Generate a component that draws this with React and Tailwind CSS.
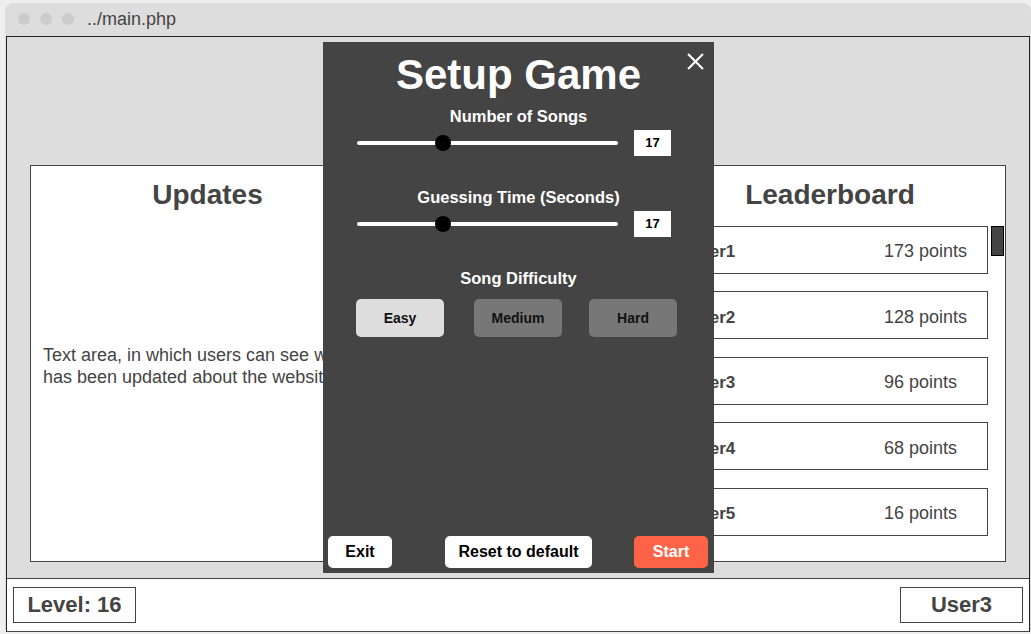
import React from 'react';

const leaders = [
  { name: 'User1', points: 173 },
  { name: 'User2', points: 128 },
  { name: 'User3', points: 96 },
  { name: 'User4', points: 68 },
  { name: 'User5', points: 16 },
];

const Slider = ({ value, pos }) => (
  <div className="flex items-center ml-[34px] self-start h-[26px]">
    <div className="relative w-[261px] h-[4px] bg-white rounded-full">
      <div
        className="absolute top-1/2 w-[16px] h-[16px] -translate-x-1/2 -translate-y-1/2 rounded-full bg-black"
        style={{ left: `${pos}px` }}
      />
    </div>
    <div className="ml-[16px] w-[37px] h-[26px] bg-white flex items-center justify-center text-[13px] font-bold text-black">
      {value}
    </div>
  </div>
);

const SetupModal = () => (
  <div className="absolute left-[323px] top-[42px] w-[391px] h-[531px] bg-[#444444] flex flex-col items-center text-white">
    <button className="absolute right-[10px] top-[11px] w-[17px] h-[17px]">
      <svg viewBox="0 0 16 16" className="w-full h-full" fill="none" stroke="white" strokeWidth="2">
        <path d="M1 1 L15 15 M15 1 L1 15" />
      </svg>
    </button>
    <h1 className="mt-[9px] text-[42px] leading-[48px] font-bold">Setup Game</h1>
    <div className="mt-[7px] text-[16.5px] leading-[20px] font-bold">Number of Songs</div>
    <div className="mt-[4px] self-stretch flex">
      <Slider value={17} pos={86} />
    </div>
    <div className="mt-[31px] text-[16.5px] leading-[20px] font-bold">Guessing Time (Seconds)</div>
    <div className="mt-[4px] self-stretch flex">
      <Slider value={17} pos={86} />
    </div>
    <div className="mt-[31px] text-[16.5px] leading-[20px] font-bold">Song Difficulty</div>
    <div className="mt-[11px] self-stretch flex pl-[33px] text-[14px] font-bold text-[#111]">
      <button className="w-[88px] h-[38px] rounded-[5px] bg-[#dddddd]">Easy</button>
      <button className="ml-[30px] w-[88px] h-[38px] rounded-[5px] bg-[#777777]">Medium</button>
      <button className="ml-[27px] w-[88px] h-[38px] rounded-[5px] bg-[#777777]">Hard</button>
    </div>
    <div className="mt-auto mb-[5px] self-stretch flex items-center px-[5px] pr-[6px] text-[16px] font-bold">
      <button className="w-[64px] h-[32px] rounded-[5px] bg-white text-black">Exit</button>
      <button className="ml-[53px] w-[147px] h-[32px] rounded-[5px] bg-white text-black">Reset to default</button>
      <button className="ml-auto w-[74px] h-[32px] rounded-[5px] bg-[#ff6347] text-white">Start</button>
    </div>
  </div>
);

export default function App() {
  return (
    <div className="relative w-[1031px] h-[634px] overflow-hidden bg-[#efefef] pt-[3px] pl-[5px] font-['Liberation_Sans',Arial,sans-serif] text-[#444]">
      <div className="w-[1026px] h-[629px] bg-[#dddddd] rounded-t-[8px] flex flex-col">
        {/* title bar */}
        <div className="h-[33px] flex items-center pl-[13px]">
          <span className="w-[12px] h-[12px] rounded-full bg-[#cccccc]" />
          <span className="ml-[10px] w-[12px] h-[12px] rounded-full bg-[#cccccc]" />
          <span className="ml-[10px] w-[12px] h-[12px] rounded-full bg-[#cccccc]" />
          <span className="ml-[13px] text-[18px] text-[#444]">../main.php</span>
        </div>

        {/* page */}
        <div className="ml-[1px] w-[1024px] h-[597px] border border-[#222] border-b-[#444] flex flex-col">
          <div className="h-[541px] flex justify-between px-[23px] pt-[128px] pb-[16px]">
            {/* Updates */}
            <div className="w-[355px] bg-white border border-[#444] flex flex-col">
              <h2 className="mt-[13px] text-center text-[28px] leading-[32px] font-bold">Updates</h2>
              <p className="mt-[133px] pl-[12px] pr-[12px] text-[18px] leading-[22px]">
                Text area, in which users can see what has been updated about the website.
              </p>
            </div>

            {/* Leaderboard */}
            <div className="w-[352px] bg-white border border-[#444] flex flex-col">
              <h2 className="mt-[13px] text-center text-[28px] leading-[32px] font-bold">Leaderboard</h2>
              <div className="mt-[15px] flex pl-[17px] pr-[1px]">
                <div className="w-[316px] flex flex-col gap-[17.5px]">
                  {leaders.map((l) => (
                    <div key={l.name} className="h-[48px] border border-[#444] flex items-center pl-[15px] pt-[4px]">
                      <span className="flex-1 font-bold text-[17px]">{l.name}</span>
                      <span className="w-[103px] shrink-0 text-[18px]">{l.points} points</span>
                    </div>
                  ))}
                </div>
                <div className="ml-[3px] w-[13px] h-[30px] bg-[#444] border border-black" />
              </div>
            </div>
          </div>

          {/* footer */}
          <div className="flex-1 bg-white border-t border-[#444] flex justify-between items-start pt-[8px] px-[6px]">
            <div className="w-[123px] h-[36px] border border-[#444] flex items-center justify-center text-[22px] font-bold">
              Level: 16
            </div>
            <div className="w-[123px] h-[36px] border border-[#444] flex items-center justify-center text-[22px] font-bold">
              User3
            </div>
          </div>
        </div>
      </div>

      <SetupModal />
    </div>
  );
}
